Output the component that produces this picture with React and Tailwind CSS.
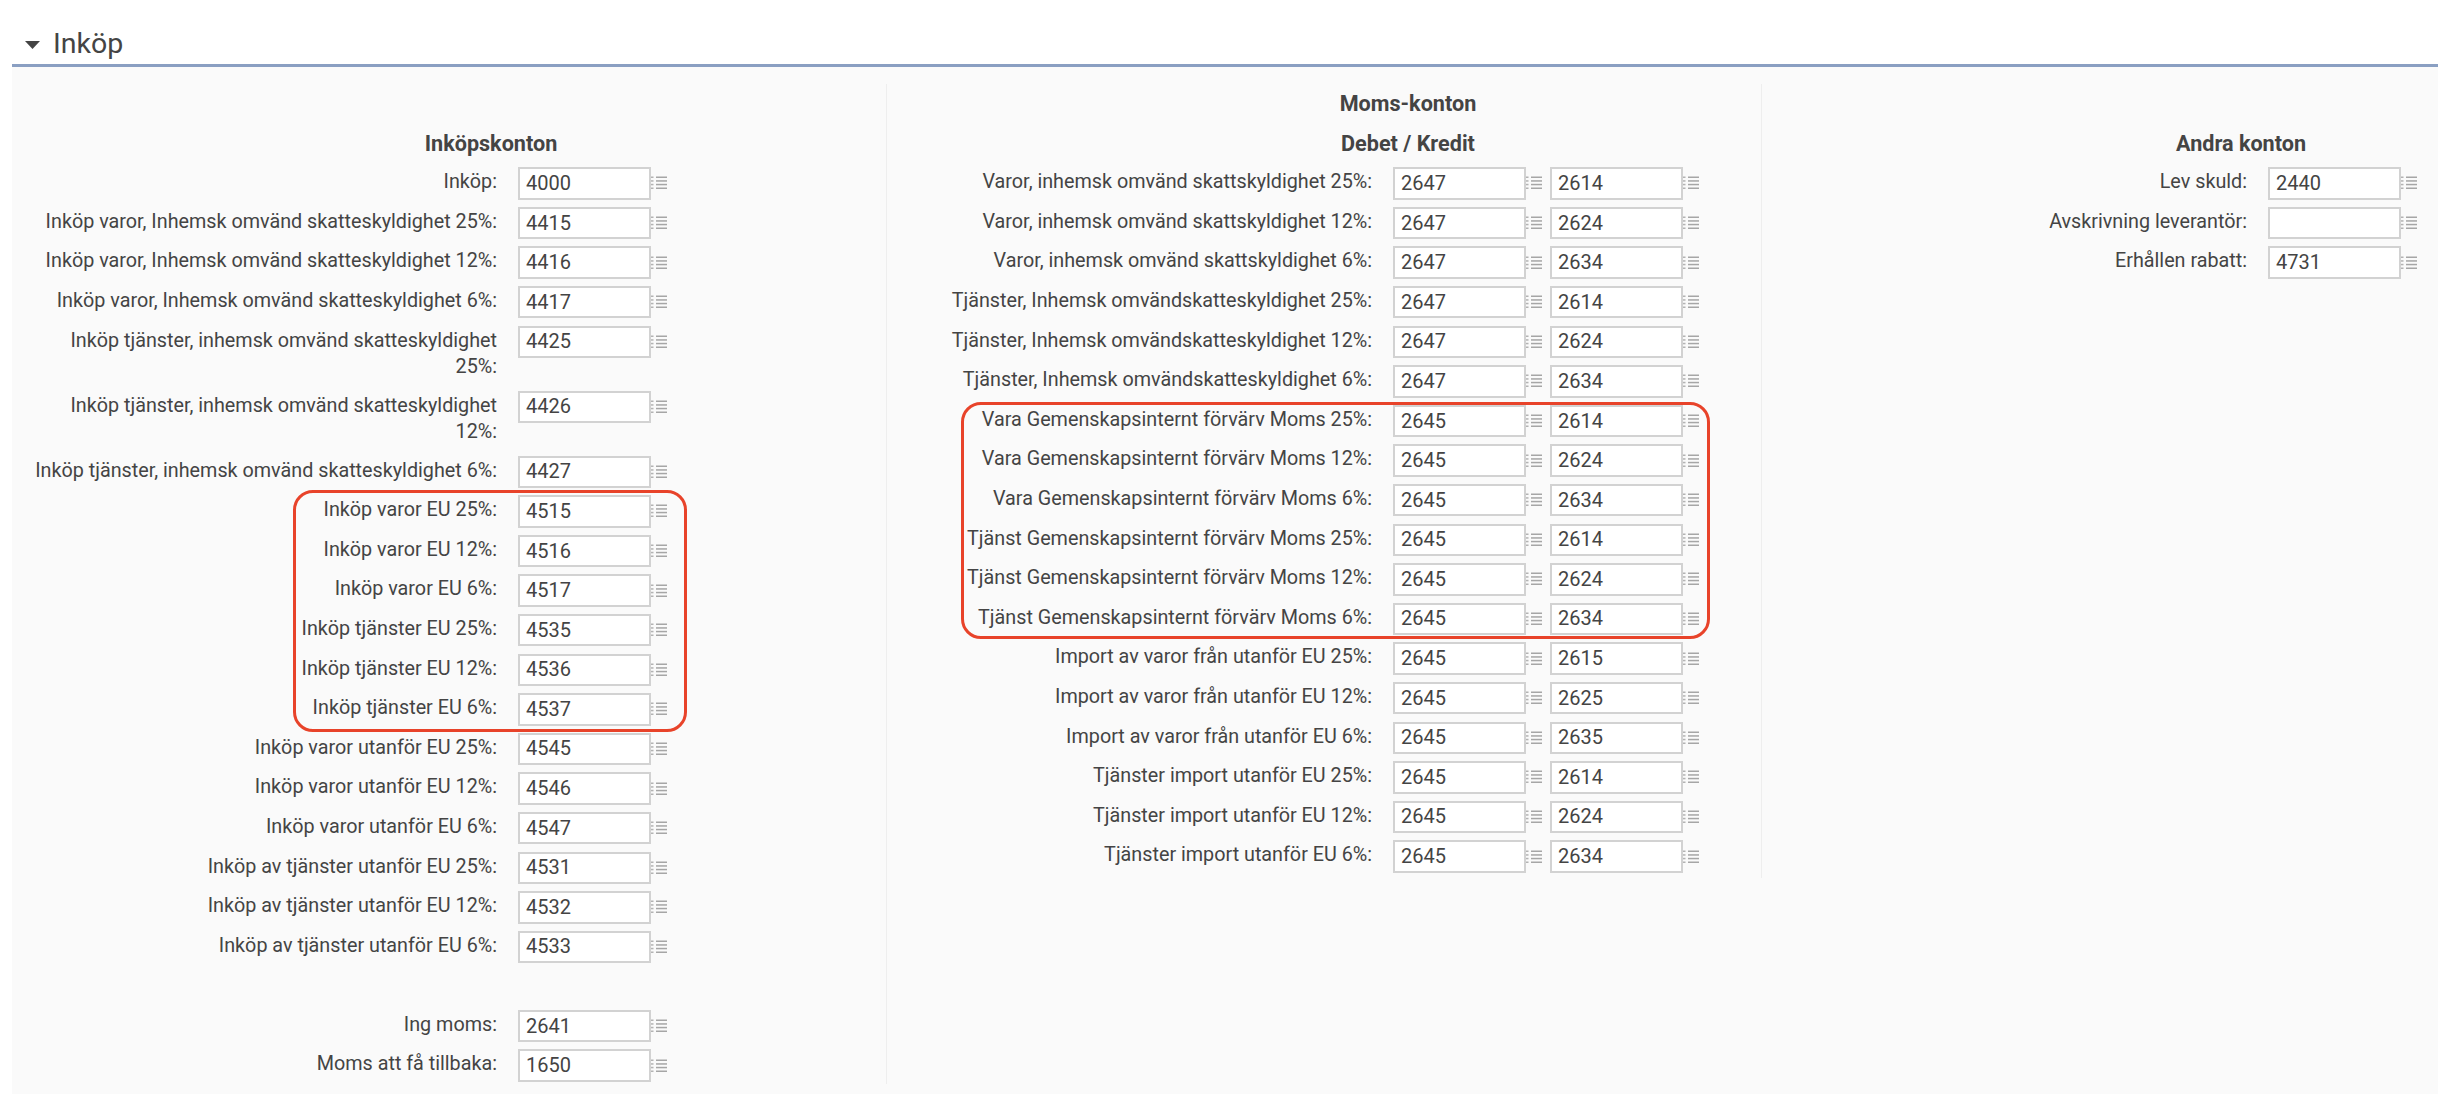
import React from 'react';

const PURCHASE_TOP = [
  ['Inköp:', '4000'],
  ['Inköp varor, Inhemsk omvänd skatteskyldighet 25%:', '4415'],
  ['Inköp varor, Inhemsk omvänd skatteskyldighet 12%:', '4416'],
  ['Inköp varor, Inhemsk omvänd skatteskyldighet 6%:', '4417'],
  ['Inköp tjänster, inhemsk omvänd skatteskyldighet 25%:', '4425', true],
  ['Inköp tjänster, inhemsk omvänd skatteskyldighet 12%:', '4426', true],
  ['Inköp tjänster, inhemsk omvänd skatteskyldighet 6%:', '4427'],
];

const PURCHASE_EU = [
  ['Inköp varor EU 25%:', '4515'],
  ['Inköp varor EU 12%:', '4516'],
  ['Inköp varor EU 6%:', '4517'],
  ['Inköp tjänster EU 25%:', '4535'],
  ['Inköp tjänster EU 12%:', '4536'],
  ['Inköp tjänster EU 6%:', '4537'],
];

const PURCHASE_REST = [
  ['Inköp varor utanför EU 25%:', '4545'],
  ['Inköp varor utanför EU 12%:', '4546'],
  ['Inköp varor utanför EU 6%:', '4547'],
  ['Inköp av tjänster utanför EU 25%:', '4531'],
  ['Inköp av tjänster utanför EU 12%:', '4532'],
  ['Inköp av tjänster utanför EU 6%:', '4533'],
];

const PURCHASE_VAT = [
  ['Ing moms:', '2641'],
  ['Moms att få tillbaka:', '1650'],
];

const VAT_TOP = [
  ['Varor, inhemsk omvänd skattskyldighet 25%:', '2647', '2614'],
  ['Varor, inhemsk omvänd skattskyldighet 12%:', '2647', '2624'],
  ['Varor, inhemsk omvänd skattskyldighet 6%:', '2647', '2634'],
  ['Tjänster, Inhemsk omvändskatteskyldighet 25%:', '2647', '2614'],
  ['Tjänster, Inhemsk omvändskatteskyldighet 12%:', '2647', '2624'],
  ['Tjänster, Inhemsk omvändskatteskyldighet 6%:', '2647', '2634'],
];

const VAT_EU = [
  ['Vara Gemenskapsinternt förvärv Moms 25%:', '2645', '2614'],
  ['Vara Gemenskapsinternt förvärv Moms 12%:', '2645', '2624'],
  ['Vara Gemenskapsinternt förvärv Moms 6%:', '2645', '2634'],
  ['Tjänst Gemenskapsinternt förvärv Moms 25%:', '2645', '2614'],
  ['Tjänst Gemenskapsinternt förvärv Moms 12%:', '2645', '2624'],
  ['Tjänst Gemenskapsinternt förvärv Moms 6%:', '2645', '2634'],
];

const VAT_REST = [
  ['Import av varor från utanför EU 25%:', '2645', '2615'],
  ['Import av varor från utanför EU 12%:', '2645', '2625'],
  ['Import av varor från utanför EU 6%:', '2645', '2635'],
  ['Tjänster import utanför EU 25%:', '2645', '2614'],
  ['Tjänster import utanför EU 12%:', '2645', '2624'],
  ['Tjänster import utanför EU 6%:', '2645', '2634'],
];

const OTHER = [
  ['Lev skuld:', '2440'],
  ['Avskrivning leverantör:', ''],
  ['Erhållen rabatt:', '4731'],
];

function ListIcon() {
  return (
    <svg width="16" height="14" viewBox="0 0 16 14" className="shrink-0 text-[#a6a6a6]">
      <g fill="currentColor">
        <rect x="0" y="0.5" width="2.5" height="1.5" opacity="0.85" />
        <rect x="0" y="4.2" width="2.5" height="1.5" opacity="0.85" />
        <rect x="0" y="7.8" width="2.5" height="1.5" opacity="0.85" />
        <rect x="0" y="11.5" width="2.5" height="1.5" opacity="0.85" />
        <rect x="5" y="0.5" width="11" height="1.5" />
        <rect x="5" y="4.2" width="11" height="1.5" />
        <rect x="5" y="7.8" width="11" height="1.5" />
        <rect x="5" y="11.5" width="11" height="1.5" />
      </g>
    </svg>
  );
}

function AccountInput({ value }) {
  return (
    <div className="flex items-center">
      <input
        readOnly
        value={value}
        className="w-[133px] h-[32.5px] bg-white border-2 border-[#d2d2d2] px-[6px] pb-[1px] text-[20px] text-[#444444] outline-none"
      />
      <ListIcon />
    </div>
  );
}

function Row({ label, values, tall }) {
  return (
    <div className={`flex items-start ${tall ? 'h-[65px]' : 'h-[39.6px]'}`}>
      <div className="w-[506px] pl-[19px] shrink-0 pr-[21px] pt-[6px] text-right leading-[26px]">
        {label}
      </div>
      <div className="flex gap-[8px] pt-[4px]">
        {values.map((v, i) => (
          <AccountInput key={i} value={v} />
        ))}
      </div>
    </div>
  );
}

function Heading({ children, className }) {
  return (
    <div className={`h-[39.6px] w-[280px] text-[21.6px] leading-[39.6px] text-center font-bold ${className}`}>
      {children}
    </div>
  );
}

// red annotation drawn over the rows
function Marker({ className, children }) {
  return (
    <div className="relative">
      {children}
      <div className={`absolute border-[3px] border-[#e8432a] rounded-[20px] pointer-events-none ${className}`} />
    </div>
  );
}

export default function App() {
  return (
    <div className="min-h-[1094px] bg-white font-['Roboto',sans-serif] text-[19.75px] text-[#444444] overflow-hidden">
      <div className="pl-[12px]">
        <div className="h-[67px] flex items-center gap-[13px] pl-[13px] pt-[24px] border-b-[3px] border-[#8a9fc2]">
          <svg width="15" height="8" viewBox="0 0 15 8" className="mt-[1px] shrink-0">
            <path d="M0 0h15L7.5 8z" fill="#444444" />
          </svg>
          <span className="text-[28.5px] leading-none">Inköp</span>
        </div>

        <div className="bg-[#fafafa] h-[1027px] pt-[17px] flex items-start">
          <div className="w-[875px] shrink-0 border-r border-[#eeeeee] h-[1000px]">
            <div className="h-[39.6px]" />
            <Heading className="ml-[339px]">Inköpskonton</Heading>
            {PURCHASE_TOP.map(([label, value, tall]) => (
              <Row key={label} label={label} values={[value]} tall={tall} />
            ))}
            <Marker className="left-[281px] w-[394px] -top-[1px] -bottom-[3px]">
              {PURCHASE_EU.map(([label, value]) => (
                <Row key={label} label={label} values={[value]} />
              ))}
            </Marker>
            {PURCHASE_REST.map(([label, value]) => (
              <Row key={label} label={label} values={[value]} />
            ))}
            <div className="h-[39.6px]" />
            {PURCHASE_VAT.map(([label, value]) => (
              <Row key={label} label={label} values={[value]} />
            ))}
          </div>

          <div className="w-[875px] shrink-0 border-r border-[#eeeeee] h-[794px]">
            <Heading className="ml-[381px]">Moms-konton</Heading>
            <Heading className="ml-[381px]">Debet / Kredit</Heading>
            {VAT_TOP.map(([label, a, b]) => (
              <Row key={label} label={label} values={[a, b]} />
            ))}
            <Marker className="left-[74px] w-[749px] top-[1px] -bottom-[1px]">
              {VAT_EU.map(([label, a, b]) => (
                <Row key={label} label={label} values={[a, b]} />
              ))}
            </Marker>
            {VAT_REST.map(([label, a, b]) => (
              <Row key={label} label={label} values={[a, b]} />
            ))}
          </div>

          <div className="flex-1">
            <div className="h-[39.6px]" />
            <Heading className="ml-[339px]">Andra konton</Heading>
            {OTHER.map(([label, value]) => (
              <Row key={label} label={label} values={[value]} />
            ))}
          </div>
        </div>
      </div>
    </div>
  );
}
